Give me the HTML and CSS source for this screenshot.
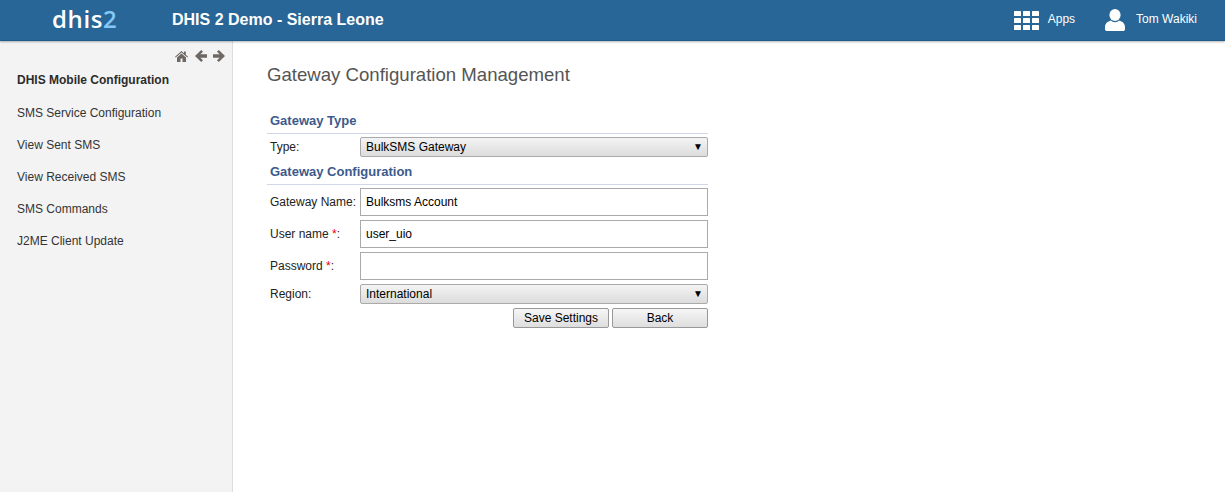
FILE: index.html
```html
<!DOCTYPE html>
<html lang="en">
<head>
<meta charset="utf-8">
<title>Gateway Configuration Management</title>
<link rel="stylesheet" href="styles.css">
</head>
<body>
<header class="topbar">
  <div class="logo">dhis<span class="logo-two">2</span></div>
  <div class="app-title">DHIS 2 Demo - Sierra Leone</div>
  <nav class="top-menu">
    <a class="top-item apps-item">
      <svg class="apps-icon" width="25" height="19" viewBox="0 0 25 19" fill="#fff" aria-hidden="true">
        <rect x="0" y="0" width="7" height="5" rx=".6"/><rect x="9" y="0" width="7" height="5" rx=".6"/><rect x="18" y="0" width="7" height="5" rx=".6"/>
        <rect x="0" y="7" width="7" height="5" rx=".6"/><rect x="9" y="7" width="7" height="5" rx=".6"/><rect x="18" y="7" width="7" height="5" rx=".6"/>
        <rect x="0" y="14" width="7" height="5" rx=".6"/><rect x="9" y="14" width="7" height="5" rx=".6"/><rect x="18" y="14" width="7" height="5" rx=".6"/>
      </svg>
      <span>Apps</span>
    </a>
    <a class="top-item user-item">
      <svg class="user-icon" width="20" height="22" viewBox="0 0 20 22" fill="#fff" aria-hidden="true">
        <ellipse cx="10" cy="6" rx="5.600" ry="6"/>
        <path d="M6 11.500C2.500 12.500 0 14.500 0 18v2.200C0 21.300 1 22 2 22h16c1 0 2-.7 2-1.800V18c0-3.500-2.500-5.500-6-6.500-1 1-2.400 1.700-4 1.700s-3-.7-4-1.700z"/>
      </svg>
      <span>Tom Wakiki</span>
    </a>
  </nav>
</header>
<div class="page">
  <aside class="sidebar">
    <div class="side-tools">
      <svg class="tool-home" width="13" height="11" viewBox="0 0 13 11" fill="#6e6864" aria-hidden="true"><path d="M6.500 0 0 5.700l.7.800L6.500 1.500l5.800 5 .7-.8L10.800 3.800V.6H9v1.600z"/><path d="M6.500 2.500 2 6.400V11h3.500V7.500h2V11H11V6.400z"/></svg>
      <svg width="12" height="12" viewBox="0 0 12 12" fill="#6e6864" aria-hidden="true"><path d="M6.200 0 8 1.800 5.400 4.300H12v3.400H5.400L8 10.200 6.200 12 0 6z"/></svg>
      <svg width="12" height="12" viewBox="0 0 12 12" fill="#6e6864" aria-hidden="true"><path d="M5.800 0 4 1.800l2.600 2.500H0v3.400h6.600L4 10.200 5.800 12 12 6z"/></svg>
    </div>
    <ul class="side-menu">
      <li class="side-head">DHIS Mobile Configuration</li>
      <li>SMS Service Configuration</li>
      <li>View Sent SMS</li>
      <li>View Received SMS</li>
      <li>SMS Commands</li>
      <li>J2ME Client Update</li>
    </ul>
  </aside>
  <main class="content">
    <h1 class="page-title">Gateway Configuration Management</h1>
    <form class="config-form">
      <h2 class="section-head">Gateway Type</h2>
      <div class="row row-select">
        <label class="field-label">Type:</label>
        <div class="select-wrap"><select class="field-select"><option>BulkSMS Gateway</option></select><span class="select-arrow">▼</span></div>
      </div>
      <h2 class="section-head section-second">Gateway Configuration</h2>
      <div class="row row-input">
        <label class="field-label">Gateway Name:</label>
        <input class="field-input" type="text" value="Bulksms Account">
      </div>
      <div class="row row-input">
        <label class="field-label">User name <em class="req">*</em>:</label>
        <input class="field-input" type="text" value="user_uio">
      </div>
      <div class="row row-input">
        <label class="field-label">Password <em class="req">*</em>:</label>
        <input class="field-input" type="password">
      </div>
      <div class="row row-select">
        <label class="field-label">Region:</label>
        <div class="select-wrap"><select class="field-select"><option>International</option></select><span class="select-arrow">▼</span></div>
      </div>
      <div class="actions">
        <button class="btn" type="button">Save Settings</button>
        <button class="btn" type="button">Back</button>
      </div>
    </form>
  </main>
</div>
</body>
</html>
```
FILE: styles.css
```css
* { box-sizing: border-box; }
html, body { margin: 0; height: 100%; }
body {
  font-family: "Liberation Sans", Arial, sans-serif;
  font-size: 12px;
  color: #222;
  background: #fff;
  overflow: hidden;
}
.topbar {
  height: 41px;
  background: #276696;
  border-bottom: 1px solid #1f5a88;
  box-shadow: 0 1px 2px rgba(0,0,0,.3);
  display: flex;
  align-items: center;
  color: #fff;
  position: relative;
  z-index: 2;
}
.logo {
  margin-left: 52px;
  margin-bottom: 3px;
  width: 120px;
  font-family: "Open Sans", sans-serif;
  font-weight: 600;
  font-size: 24px;
  letter-spacing: .6px;
  line-height: 38px;
}
.logo-two { color: #85c8f8; }
.app-title {
  font-size: 16px;
  font-weight: bold;
}
.top-menu {
  margin-left: auto;
  display: flex;
  align-items: center;
  padding-right: 28px;
}
.top-item {
  display: flex;
  align-items: center;
  color: #fff;
  line-height: 18px;
}
.top-item span { position: relative; top: -1px; }
.apps-item { gap: 9px; margin-right: 30px; }
.user-item { gap: 11px; }
.page {
  display: flex;
  height: 451px;
}
.sidebar {
  width: 233px;
  background: #f3f3f3;
  border-right: 1px solid #ddd;
  flex: none;
}
.side-tools {
  display: flex;
  justify-content: flex-end;
  align-items: center;
  gap: 6px;
  height: 12px;
  margin-top: 9px;
  padding-right: 7px;
}
.tool-home { margin-right: 1px; }
.side-menu {
  list-style: none;
  margin: 9px 0 0;
  padding: 0 0 0 17px;
}
.side-menu li {
  height: 32px;
  line-height: 18px;
  color: #333;
}
.side-menu .side-head {
  font-weight: bold;
  height: 33px;
  color: #2c2c2c;
}
.content {
  flex: 1;
  padding: 0 0 0 34px;
}
.page-title {
  margin: 22px 0 0;
  font-size: 18.6px;
  font-weight: normal;
  line-height: 24px;
  color: #555;
}
.config-form {
  width: 441px;
  margin-top: 25px;
}
.section-head {
  margin: 0;
  padding-left: 3px;
  height: 22px;
  font-size: 13px;
  line-height: 18px;
  font-weight: bold;
  color: #3c5a8c;
  border-bottom: 1px solid #cfd8e6;
}
.section-second { margin-top: 6px; }
.row {
  display: flex;
  align-items: center;
  padding-left: 3px;
  margin-top: 4px;
}
.row-select { height: 20px; }
.row-input { height: 28px; }
.section-head + .row { margin-top: 3px; }
.field-label {
  width: 90px;
  flex: none;
  color: #222;
}
.req { color: #e00; font-style: normal; }
.field-input {
  width: 348px;
  height: 28px;
  border: 1px solid #aaa;
  background: #fff;
  padding: 0 5px;
  font: 12px "Liberation Sans", Arial, sans-serif;
  color: #000;
  border-radius: 0;
  outline: none;
}
.select-wrap {
  position: relative;
  width: 348px;
  height: 20px;
}
.field-select {
  appearance: none;
  -webkit-appearance: none;
  display: block;
  width: 100%;
  height: 20px;
  border: 1px solid #aaa;
  border-radius: 2px;
  padding: 0 5px;
  font: 12px "Liberation Sans", Arial, sans-serif;
  color: #000;
  background: linear-gradient(#f4f4f4, #dcdcdc);
}
.select-arrow {
  position: absolute;
  right: 5px;
  top: 4px;
  font-size: 10px;
  line-height: 12px;
  color: #000;
  pointer-events: none;
}
.actions {
  display: flex;
  justify-content: flex-end;
  gap: 3px;
  margin-top: 4px;
}
.btn {
  width: 96px;
  height: 20px;
  padding: 0;
  border: 1px solid #999;
  border-radius: 2px;
  background: linear-gradient(#f6f6f6, #dedede);
  font: 12px "Liberation Sans", Arial, sans-serif;
  color: #000;
}
```
